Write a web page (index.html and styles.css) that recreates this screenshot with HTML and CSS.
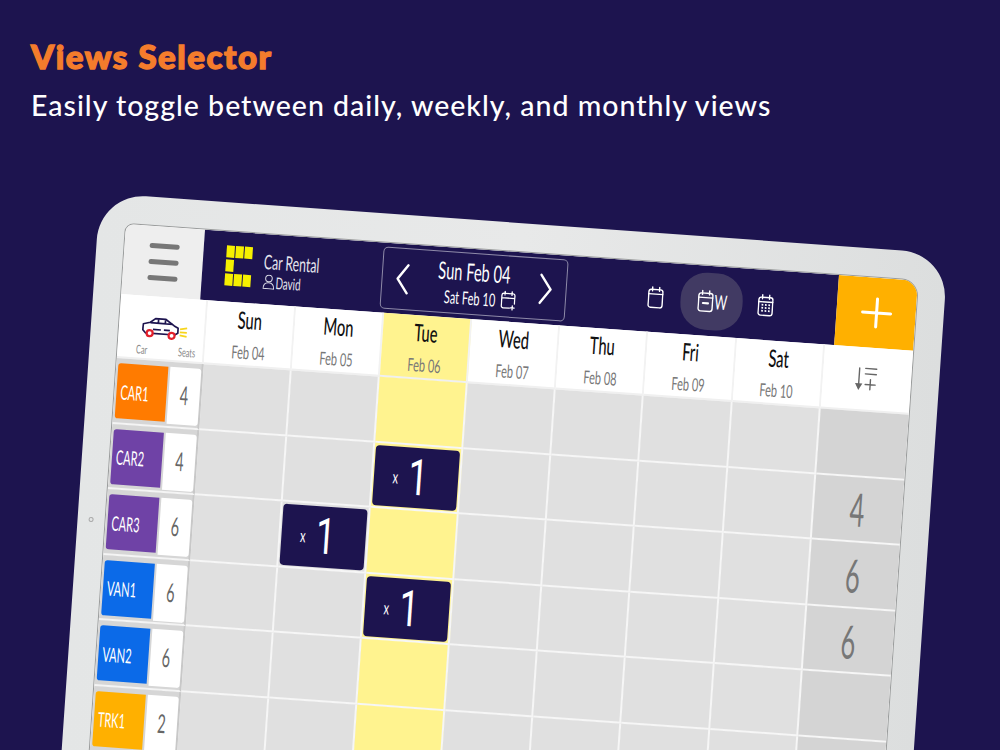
FILE: index.html
```html
<!DOCTYPE html>
<html lang="en">
<head>
    <meta charset="UTF-8">
    <title>Views Selector</title>
    <link rel="stylesheet" href="styles.css">
</head>
<body>
    <div class="caption">
        <h1>Views Selector</h1>
        <p>Easily toggle between daily, weekly, and monthly views</p>
    </div>

    <div class="tablet">
        <span class="camera"></span>
        <div class="screen">
            <div class="topbar">
                <div class="menu-box">
                    <span></span><span></span><span></span>
                </div>
                <div class="navbar">
                    <div class="logo">
                        <i></i><i></i><i></i>
                        <i></i><b></b><b></b>
                        <i></i><i></i><i></i>
                    </div>
                    <div class="brand">
                        <span class="nr brand-name">Car Rental</span>
                        <span class="brand-user">
                            <svg width="12" height="15" viewBox="0 0 12 15" fill="none" stroke="#d8d8e4" stroke-width="1"><circle cx="6" cy="4" r="3.3"/><path d="M.7 14.3c0-4 2-6 5.300-6s5.300 2 5.300 6z"/></svg>
                            <span class="nr">David</span>
                        </span>
                    </div>
                    <div class="range">
                        <svg width="14" height="32" viewBox="0 0 14 32" fill="none" stroke="#fff" stroke-width="2.400" stroke-linecap="round" stroke-linejoin="round"><path d="M12 2 2 16l10 14"/></svg>
                        <div class="range-text">
                            <span class="nr range-from">Sun Feb 04</span>
                            <span class="range-to">
                                <span class="nr">Sat Feb 10</span>
                                <svg width="15" height="20" viewBox="0 0 15 20" fill="none" stroke="#fff" stroke-width="1.300" stroke-linecap="round"><path d="M9 17.500H3a2 2 0 0 1-2-2V5a2 2 0 0 1 2-2h9a2 2 0 0 1 2 2v8M1 7.500h13M4 1v3.500M11 1v3.500M12 15v4M10 17h4"/></svg>
                            </span>
                        </div>
                        <svg width="14" height="32" viewBox="0 0 14 32" fill="none" stroke="#fff" stroke-width="2.400" stroke-linecap="round" stroke-linejoin="round"><path d="m2 2 10 14L2 30"/></svg>
                    </div>
                    <div class="views">
                        <span class="view">
                            <svg width="16" height="23" viewBox="0 0 16 23" fill="none" stroke="#fff" stroke-width="1.400" stroke-linecap="round"><rect x="1" y="3.500" width="14" height="18" rx="2.500"/><path d="M1 8h14M4.500 1v4M11.500 1v4"/></svg>
                        </span>
                        <span class="view view-active">
                            <svg width="16" height="23" viewBox="0 0 16 23" fill="none" stroke="#fff" stroke-width="1.400" stroke-linecap="round"><rect x="1" y="3.500" width="14" height="18" rx="2.500"/><path d="M1 8h14M4.500 1v4M11.500 1v4"/><path d="M5.500 13.500h5" stroke-width="2.200"/></svg>
                            <span class="nr">W</span>
                        </span>
                        <span class="view">
                            <svg width="16" height="23" viewBox="0 0 16 23" fill="none" stroke="#fff" stroke-width="1.400" stroke-linecap="round"><rect x="1" y="3.500" width="14" height="18" rx="2.500"/><path d="M1 8h14M4.500 1v4M11.500 1v4"/><path d="M4 11h8.500M4 14h8.500M4 17h8.500" stroke-width="1.700" stroke-linecap="butt" stroke-dasharray="1.700 1.700"/></svg>
                        </span>
                    </div>
                </div>
                <div class="add-box">
                    <svg width="32" height="32" viewBox="0 0 32 32" stroke="#fff" stroke-width="3" stroke-linecap="round"><path d="M16 2v28M2 16h28"/></svg>
                </div>
            </div>

            <div class="schedule" id="schedule"></div>
        </div>
    </div>

    <script>
        const days = [['Sun', 'Feb 04'], ['Mon', 'Feb 05'], ['Tue', 'Feb 06'], ['Wed', 'Feb 07'], ['Thu', 'Feb 08'], ['Fri', 'Feb 09'], ['Sat', 'Feb 10']];
        const vehicles = [
            ['CAR1', 4, 'orange', ''], ['CAR2', 4, 'purple', 4], ['CAR3', 6, 'purple', 6],
            ['VAN1', 6, 'blue', 6], ['VAN2', 6, 'blue', ''], ['TRK1', 2, 'yellow', ''],
            ['', '', '', ''], ['', '', '', '']
        ];
        const bookings = { '1-2': 1, '2-1': 1, '3-2': 1 };

        let html = `
            <div class="head-cell head-car">
                <svg class="car-icon" width="48" height="24" viewBox="0 0 48 24" fill="none" stroke="#1d144f" stroke-width="1.700" stroke-linejoin="round">
                    <path d="M1 14V8l7-2 5-4h10l9 6 4 2v5l-3 2H4z"/>
                    <path d="M8 6.500h22M16 2.500V7M23 3v4.500M11 13h8M22 13h6"/>
                    <circle cx="8" cy="17" r="3" fill="#fff" stroke="#e2202c" stroke-width="2.200"/>
                    <circle cx="30" cy="18" r="3" fill="#fff" stroke="#e2202c" stroke-width="2.200"/>
                    <path d="M38 11l7-1.500M38 14h7M38 17l7 1" stroke="#f7d51d"/>
                </svg>
                <div class="head-car-labels"><span class="nr">Car</span><span class="nr">Seats</span></div>
            </div>`;

        days.forEach((day, i) => {
            html += `<div class="head-cell ${i === 2 ? 'today' : ''}">
                <span class="nr day-name">${day[0]}</span>
                <span class="nr day-date">${day[1]}</span>
            </div>`;
        });

        html += `<div class="head-cell head-sort">
            <svg width="24" height="26" viewBox="0 0 24 26" fill="none" stroke="#666" stroke-width="1.400" stroke-linecap="round">
                <path d="M4 3v19"/><path d="M1.500 19 4 23.500 6.500 19z" fill="#666"/>
                <path d="M10 3h11M10 8.500h11M15.500 14v10M10.500 19h10"/>
            </svg>
        </div>`;

        vehicles.forEach((car, row) => {
            html += `<div class="label-cell">`;
            if (car[0]) {
                html += `<span class="car-tag ${car[2]}"><span class="nr">${car[0]}</span></span>
                    <span class="car-seats"><span class="nr">${car[1]}</span></span>`;
            }
            html += `</div>`;
            days.forEach((day, col) => {
                html += `<div class="cell ${col === 2 ? 'today' : ''}">`;
                if (bookings[row + '-' + col]) {
                    html += `<div class="booking"><span class="nr booking-x">x</span><span class="nr booking-n">${bookings[row + '-' + col]}</span></div>`;
                }
                html += `</div>`;
            });
            html += `<div class="cell total"><span class="nr">${car[3]}</span></div>`;
        });

        document.getElementById('schedule').innerHTML = html;
    </script>
</body>
</html>
```
FILE: styles.css
```css
* {
    box-sizing: border-box;
}

html,
body {
    height: 750px;
    margin: 0;
    overflow: hidden;
}

body {
    background-color: #1d144f;
    font-family: Lato, sans-serif;
}

.caption {
    height: 195px;
    padding: 36px 31px 0;
}

.caption h1 {
    margin: 0;
    font-size: 33px;
    line-height: 40px;
    font-weight: 900;
    color: #f47c2c;
    letter-spacing: 1.55px;
    -webkit-text-stroke: 1.4px #f47c2c;
}

.caption p {
    margin: 9px 0 0;
    font-size: 28.5px;
    line-height: 40px;
    font-weight: 500;
    color: #fff;
    letter-spacing: 1px;
}

/* the tablet is a free object on the canvas, tilted round its screen corner */
.tablet {
    position: relative;
    width: 848px;
    height: 800px;
    margin-left: 97.5px;
    padding: 29px 28px;
    border-radius: 46px;
    background: linear-gradient(90deg, #e4e6e6, #e8e9e9 50%, #dcdede);
    transform-origin: 28px 29px;
    transform: matrix(1, 0.0716, -0.0688, 1, 0, 0);
}

.camera {
    position: absolute;
    left: 11px;
    top: 323px;
    width: 5px;
    height: 5px;
    border: 1px solid #aaa;
    border-radius: 50%;
}

.screen {
    width: 792px;
    height: 760px;
    border-radius: 8px 16px 0 0;
    overflow: hidden;
    background: #fff;
    box-shadow: 0 0 0 1px #9a9c9c;
}

.nr {
    display: inline-block;
    transform: scaleX(0.61);
}

.topbar {
    display: flex;
    height: 70px;
}

.menu-box {
    width: 79px;
    background: #eee;
    display: flex;
    flex-direction: column;
    align-items: center;
    justify-content: center;
    gap: 11px;
}

.menu-box span {
    width: 30px;
    height: 5px;
    border-radius: 3px;
    background: #777;
}

.navbar {
    flex: 1;
    display: flex;
    align-items: center;
    background: #1d144f;
    padding-left: 23px;
}

.logo {
    display: grid;
    grid-template-columns: repeat(3, 8px);
    grid-template-rows: repeat(3, 12px);
    gap: 2px 1px;
    margin-bottom: 2px;
}

.logo i {
    background: #f6f000;
}

.brand {
    display: flex;
    flex-direction: column;
    width: 118px;
    margin-left: 12px;
    color: #e6e6ee;
}

.brand .nr {
    transform-origin: left center;
}

.brand-name {
    font-size: 20px;
    line-height: 24px;
    white-space: nowrap;
}

.brand-user {
    display: flex;
    align-items: center;
    gap: 1px;
    font-size: 16px;
    line-height: 17px;
}

.range {
    display: flex;
    align-items: center;
    justify-content: space-between;
    width: 185px;
    height: 62px;
    padding: 0 13px;
    border: 1.5px solid #8e8aa8;
    border-radius: 5px;
    color: #fff;
}

.range-text {
    display: flex;
    flex-direction: column;
    align-items: center;
    margin-top: -4px;
}

.range-from {
    font-size: 24px;
    line-height: 32px;
    white-space: nowrap;
}

.range-to {
    display: flex;
    align-items: center;
    margin-left: 10px;
    font-size: 18px;
    line-height: 20px;
    white-space: nowrap;
}

.range-to .nr {
    margin: 0 -11px 0 -12px;
}

.views {
    display: flex;
    align-items: center;
    margin-left: 71px;
}

.view {
    display: flex;
    align-items: center;
    justify-content: center;
    width: 35px;
    height: 57px;
    color: #fff;
    font-size: 20px;
}

.view-active {
    width: 62px;
    margin: 0 5px 0 8px;
    border-radius: 26px;
    background: #413a63;
}

.view-active .nr {
    margin: 0 -5px 0 -3px;
}

.add-box {
    width: 79px;
    display: flex;
    align-items: center;
    justify-content: center;
    background: #ffb000;
}

.schedule {
    display: grid;
    grid-template-columns: 87px repeat(7, 88.1px) 88.300px;
    grid-template-rows: 64px;
    grid-auto-rows: 65.600px;
}

.head-cell {
    display: flex;
    flex-direction: column;
    align-items: center;
    justify-content: center;
    background: #fff;
    border-right: 2px solid #f2f2f2;
    border-bottom: 2px solid #f0f0f0;
}

.head-cell.today {
    background: #fff38f;
}

.day-name {
    font-size: 24px;
    line-height: 30px;
    font-weight: 500;
    color: #111;
}

.day-date {
    margin-top: 6px;
    font-size: 18px;
    line-height: 22px;
    color: #777;
}

.head-car {
    justify-content: flex-end;
}

.car-icon {
    margin-left: 8px;
}

.head-car-labels {
    display: flex;
    justify-content: space-between;
    align-self: flex-start;
    width: 68px;
    margin: 3px 0 1px 15px;
    font-size: 12px;
    line-height: 14px;
    color: #888;
}

.head-sort {
    border-right: 0;
}

.label-cell {
    display: flex;
    align-items: flex-start;
    padding: 5px 0 0 2px;
    background: #d6d6d6;
    border-bottom: 2px solid #f4f4f4;
    border-right: 2px solid #c8c8c8;
}

.car-tag {
    display: flex;
    align-items: center;
    width: 50px;
    height: 55px;
    padding-left: 4px;
    border-radius: 3px 0 0 3px;
    color: #fff;
    font-size: 20px;
}

.car-tag .nr {
    transform-origin: left center;
    transform: scaleX(0.55);
}

.car-tag.orange { background: #ff7b00; }
.car-tag.purple { background: #6f42a6; }
.car-tag.blue { background: #0b6ae8; }
.car-tag.yellow { background: #ffb000; }

.car-seats {
    display: flex;
    align-items: center;
    justify-content: center;
    width: 31px;
    height: 57px;
    margin-left: 2px;
    padding-bottom: 3px;
    border-radius: 0 3px 3px 0;
    background: #fff;
    color: #666;
    font-size: 26px;
}

.car-seats .nr {
    transform: scaleX(0.55);
}

.cell {
    display: flex;
    padding: 2px 1px 1px 1px;
    background: #e0e0e0;
    border-right: 2px solid #f6f6f6;
    border-bottom: 2px solid #f6f6f6;
}

.cell.today {
    background: #fff38f;
}

.cell.total {
    align-items: center;
    justify-content: center;
    border-right: 0;
    background: #d4d4d4;
    color: #777;
    font-size: 46px;
}

.cell.total .nr {
    transform: scaleX(0.55);
}

.booking {
    flex: 1;
    display: flex;
    align-items: center;
    padding-left: 17px;
    border-radius: 4px;
    background: #1d144f;
    color: #fff;
}

.booking-x {
    font-size: 18px;
    margin-right: 4px;
}

.booking-n {
    font-family: Roboto, sans-serif;
    font-size: 50px;
    font-weight: 400;
    transform: scaleX(0.7);
}
```
